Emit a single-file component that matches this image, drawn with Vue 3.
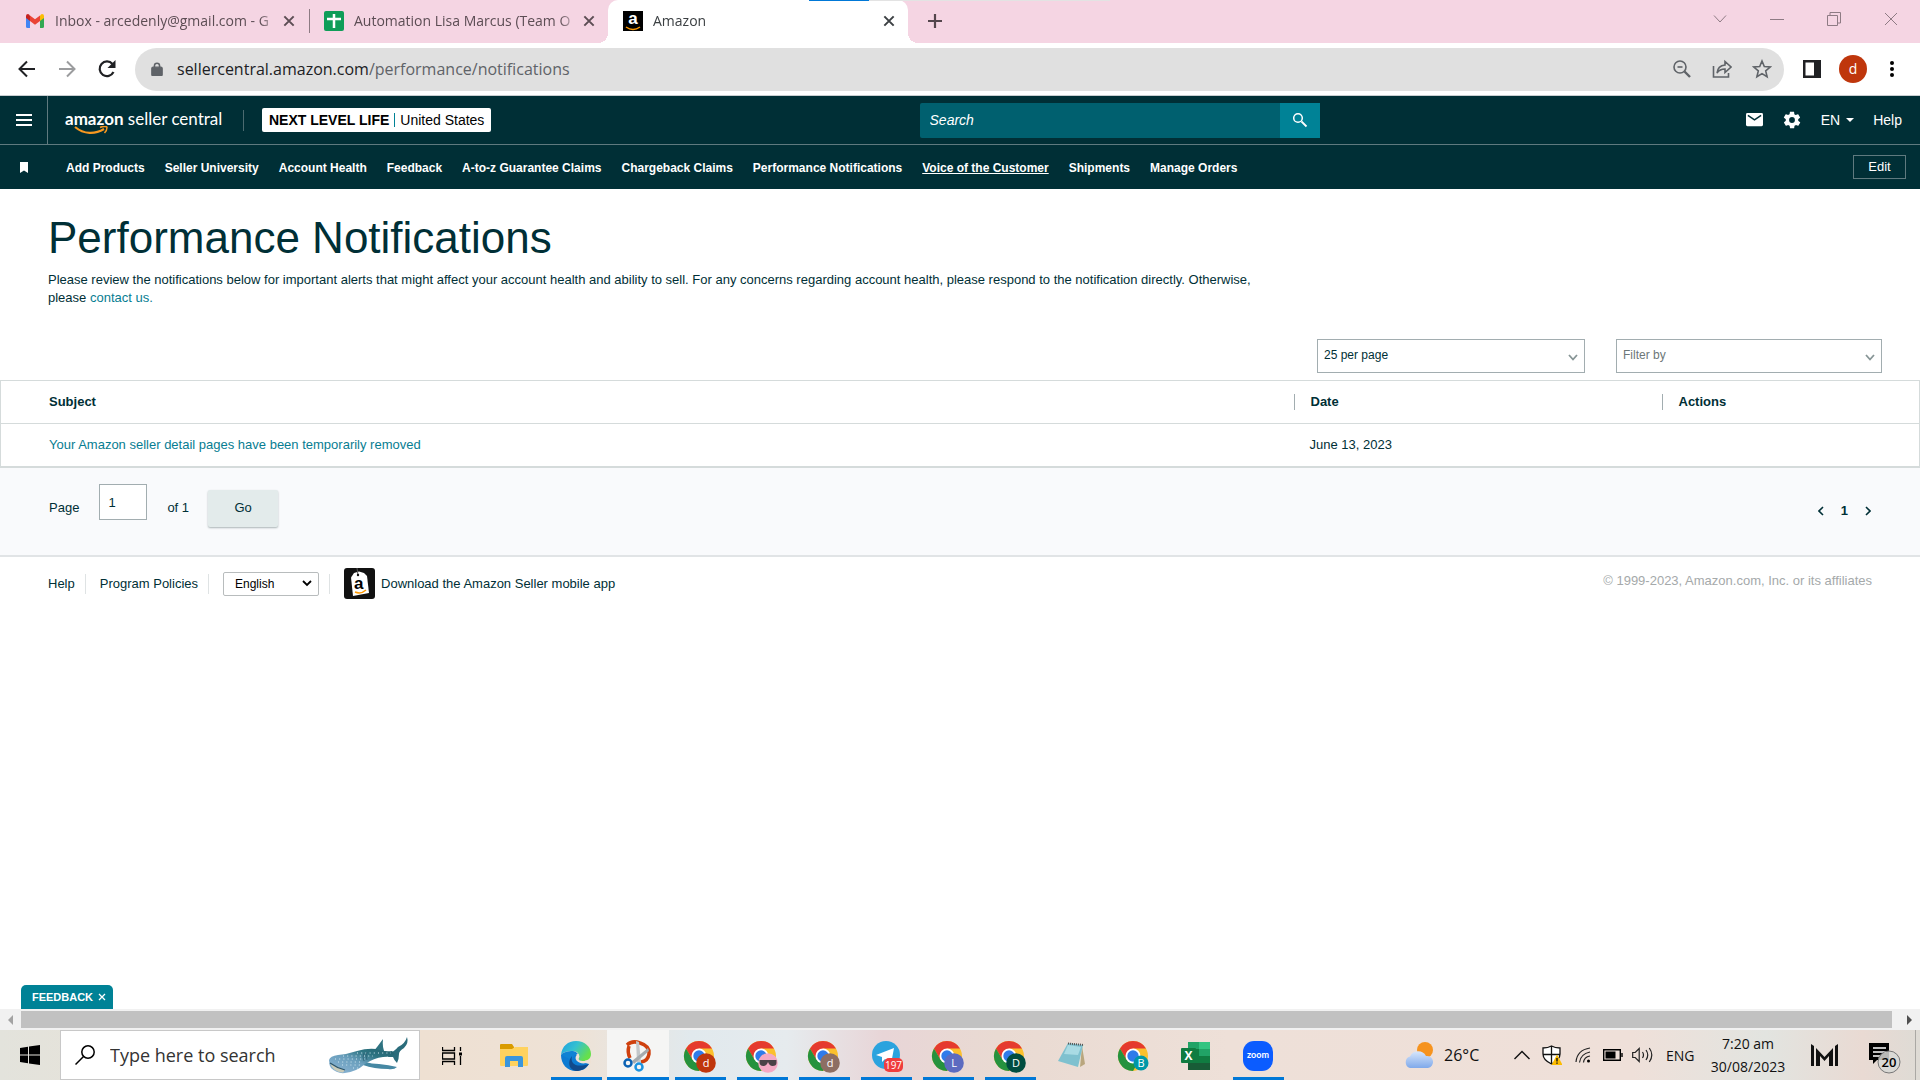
<script setup>
import { ref } from 'vue'

const tabs = [
  { id: 'gmail', title: 'Inbox - arcedenly@gmail.com - G', active: false },
  { id: 'sheet', title: 'Automation Lisa Marcus (Team O', active: false },
  { id: 'amazon', title: 'Amazon', active: true }
]

const favorites = [
  'Add Products',
  'Seller University',
  'Account Health',
  'Feedback',
  'A-to-z Guarantee Claims',
  'Chargeback Claims',
  'Performance Notifications',
  'Voice of the Customer',
  'Shipments',
  'Manage Orders'
]
const hovered = 'Voice of the Customer'

const notifications = [
  { subject: 'Your Amazon seller detail pages have been temporarily removed', date: 'June 13, 2023' }
]

// Taskbar apps, left to right
const apps = [
  { id: 'taskview', label: 'Task View' },
  { id: 'explorer', label: 'File Explorer' },
  { id: 'edge', label: 'Edge', open: true },
  { id: 'snip', label: 'Snipping Tool', open: true, current: true },
  { id: 'chrome', label: 'Chrome d', open: true, badge: 'd', color: '#bf360c' },
  { id: 'chrome', label: 'Chrome', open: true, badge: '', color: '#f4a9c4' },
  { id: 'chrome', label: 'Chrome d', open: true, badge: 'd', color: '#8d6e63' },
  { id: 'telegram', label: 'Telegram', open: true },
  { id: 'chrome', label: 'Chrome L', open: true, badge: 'L', color: '#5c6bc0' },
  { id: 'chrome', label: 'Chrome D', open: true, badge: 'D', color: '#004d40' },
  { id: 'notepad', label: 'Notepad' },
  { id: 'chrome', label: 'Chrome B', badge: 'B', color: '#0097a7', small: true },
  { id: 'excel', label: 'Excel' },
  { id: 'zoom', label: 'Zoom', open: true }
]

const page = ref('1')
const perPage = ref('25 per page')
const filterBy = ref('Filter by')
const language = ref('English')
const query = ref('')
const winQuery = ref('')
</script>

<template>
  <div class="screen">
    <!-- Browser tabs -->
    <div class="tabstrip">
      <div class="progress"></div>
      <div v-for="tab in tabs" :key="tab.id" class="tab" :class="[tab.id, { active: tab.active }]">
        <svg v-if="tab.id === 'gmail'" class="favicon" viewBox="0 0 20 16">
          <path d="M1 3v10.500Q1 15 2.500 15H5V6.500z" fill="#4285f4" />
          <path d="M19 3v10.500q0 1.500-1.500 1.500H15V6.500z" fill="#34a853" />
          <path d="M15 2.500V8l4-3V3q0-2-2-2-1 0-2 1.500z" fill="#fbbc04" />
          <path d="M5 8V2.500l5 3.700 5-3.700V8l-5 3.800z" fill="#ea4335" />
          <path d="M1 3v2l4 3V2.500Q4 1 3 1 1 1 1 3z" fill="#c5221f" />
        </svg>
        <svg v-else-if="tab.id === 'sheet'" class="favicon" viewBox="0 0 20 20">
          <rect width="20" height="20" rx="2" fill="#0f9d58" />
          <path d="M10 3v14M3 8h14" stroke="#fff" stroke-width="2.500" />
        </svg>
        <span v-else class="favicon amazon-icon">
          <b>a</b>
          <svg viewBox="0 0 18 5"><path d="M2 1q7 5 14 0" fill="none" stroke="#f90" stroke-width="1.500" /></svg>
        </span>
        <span class="tab-title">{{ tab.title }}</span>
        <button class="tab-close" aria-label="Close tab">
          <svg viewBox="0 0 12 12"><path d="M2 2l8 8M10 2l-8 8" stroke="currentColor" stroke-width="1.700" /></svg>
        </button>
      </div>
      <button class="new-tab" aria-label="New tab">
        <svg viewBox="0 0 16 16"><path d="M8 1v14M1 8h14" stroke="#54464d" stroke-width="2.200" /></svg>
      </button>
      <div class="window-buttons">
        <button aria-label="Search tabs"><svg viewBox="0 0 14 14"><path d="M1 3.500l6 6.500 6-6.500" /></svg></button>
        <button aria-label="Minimize"><svg viewBox="0 0 14 14"><path d="M0 7.500h14" /></svg></button>
        <button aria-label="Restore"><svg viewBox="0 0 14 14"><path d="M.5 3.500h10v10H.5zM3 3.500v-3h10.500V11H10.500" /></svg></button>
        <button aria-label="Close"><svg viewBox="0 0 14 14"><path d="M1 1l12 12M13 1L1 13" /></svg></button>
      </div>
    </div>

    <!-- Address bar -->
    <div class="toolbar">
      <button aria-label="Back"><svg viewBox="0 0 20 20"><path d="M18 10H3M10 2.500L2.500 10l7.500 7.500" fill="none" stroke="#202124" stroke-width="2" /></svg></button>
      <button aria-label="Forward"><svg viewBox="0 0 20 20"><path d="M2 10h15M10 2.500l7.500 7.500-7.500 7.500" fill="none" stroke="#9b9c9e" stroke-width="2" /></svg></button>
      <button aria-label="Reload"><svg viewBox="0 0 20 20"><path d="M16.500 13A7.300 7.300 0 1 1 15.500 5" fill="none" stroke="#202124" stroke-width="2.200" /><path d="M18.500 1v8h-8z" fill="#202124" /></svg></button>
      <div class="omnibox">
        <svg class="lock" viewBox="0 0 14 16"><rect x="1" y="6" width="12" height="10" rx="1.500" fill="#5f6368" /><path d="M4 7V4.500a3 3 0 0 1 6 0V7" fill="none" stroke="#5f6368" stroke-width="1.800" /></svg>
        <a class="url" href="#">sellercentral.amazon.com<span>/performance/notifications</span></a>
        <button aria-label="Zoom"><svg viewBox="0 0 20 20"><circle cx="8" cy="8" r="6" /><path d="M12.500 12.500L18 18" stroke-width="2.400" /><path d="M5.500 8h5" /></svg></button>
        <button aria-label="Share"><svg viewBox="0 0 20 20"><path d="M1.500 7v11h15v-4M5 14c.5-5 3-7.500 8-8V2.500L19 8l-6 5.500V10c-4 0-6 1-8 4z" /></svg></button>
        <button aria-label="Bookmark"><svg viewBox="0 0 20 20"><path d="M10 2l2.300 5.500 5.900.5-4.500 3.900 1.400 5.800L10 14.600l-5.100 3.100 1.400-5.800L1.800 8l5.900-.5z" /></svg></button>
      </div>
      <button class="panel" aria-label="Side panel"><svg viewBox="0 0 18 18"><path d="M0 0h18v18H0zM2.500 2.500v13H11v-13z" fill="#202124" fill-rule="evenodd" /></svg></button>
      <button class="avatar">d</button>
      <button class="more" aria-label="Menu"><svg viewBox="0 0 6 18"><circle cx="3" cy="3" r="2" /><circle cx="3" cy="9" r="2" /><circle cx="3" cy="15" r="2" /></svg></button>
    </div>

    <!-- Seller Central header -->
    <header class="header">
      <div class="header-main">
        <button class="hamburger" aria-label="Menu"><svg viewBox="0 0 16 12"><path d="M0 1h16M0 6h16M0 11h16" stroke="#fff" stroke-width="1.800" /></svg></button>
        <a class="logo" href="#">
          <span class="logo-name"><b>amazon</b> seller central</span>
          <svg class="smile" viewBox="0 0 34 9"><path d="M1 1c9 7.500 20 7.500 29 2" fill="none" stroke="#f79820" stroke-width="2.200" /><path d="M26 1.500c3-1.500 7-1.500 7 0s-1 4-2.500 5.500" fill="none" stroke="#f79820" stroke-width="1.500" /></svg>
        </a>
        <button class="account"><b>NEXT LEVEL LIFE</b><i></i>United States</button>
        <form class="search" @submit.prevent>
          <input v-model="query" type="text" placeholder="Search" aria-label="Search" />
          <button aria-label="Search"><svg viewBox="0 0 16 16"><circle cx="6" cy="6" r="4.300" fill="none" stroke="#fff" stroke-width="1.500" /><path d="M9.500 9.500l5 5" stroke="#fff" stroke-width="1.800" /></svg></button>
        </form>
        <div class="header-tools">
          <button aria-label="Messages"><svg class="mail" viewBox="0 0 18 14"><rect width="18" height="14" rx="1.500" fill="#fff" /><path d="M2 2.500l7 4.700 7-4.700" fill="none" stroke="#002f36" stroke-width="1.600" /></svg></button>
          <button aria-label="Settings"><svg class="gear" viewBox="0 0 24 24"><path fill="#fff" fill-rule="evenodd" d="M19.400 13c0-.3.100-.6.100-1s0-.7-.1-1l2.100-1.600c.2-.2.300-.4.100-.7l-2-3.400c-.1-.2-.4-.3-.6-.2l-2.500 1c-.5-.4-1.100-.7-1.700-1L14.500 2.400c0-.2-.2-.4-.5-.4h-4c-.3 0-.5.200-.5.400l-.4 2.700c-.6.200-1.100.6-1.700 1l-2.500-1c-.2-.1-.5 0-.6.200l-2 3.400c-.1.200-.1.500.1.700L4.600 11c0 .3-.1.600-.1 1s0 .7.1 1l-2.100 1.600c-.2.200-.2.400-.1.700l2 3.400c.1.200.4.300.6.200l2.500-1c.5.400 1.100.7 1.700 1l.4 2.700c0 .2.200.4.500.4h4c.3 0 .5-.2.500-.4l.4-2.700c.6-.2 1.100-.6 1.700-1l2.500 1c.2.100.5 0 .6-.2l2-3.400c.1-.2.100-.5-.1-.7zM12 15.500a3.500 3.500 0 1 1 0-7 3.500 3.500 0 0 1 0 7z" /></svg></button>
          <button class="lang">EN <svg viewBox="0 0 8 4"><path d="M0 0h8L4 4z" fill="#fff" /></svg></button>
          <a href="#">Help</a>
        </div>
      </div>
      <nav class="favorites">
        <svg class="bookmark" viewBox="0 0 8 11"><path d="M0 0h8v11L4 8.500 0 11z" fill="#fff" /></svg>
        <a v-for="item in favorites" :key="item" href="#" :class="{ hovered: item === hovered }">{{ item }}</a>
        <button class="edit">Edit</button>
      </nav>
    </header>

    <!-- Page -->
    <main class="content">
      <section class="intro">
        <h1>Performance Notifications</h1>
        <p>
          Please review the notifications below for important alerts that might affect your account health and ability to sell.
          For any concerns regarding account health, please respond to the notification directly. Otherwise, please
          <a href="#">contact us.</a>
        </p>
      </section>
      <div class="filters">
        <div class="dropdown">
          <select v-model="perPage" aria-label="Results per page"><option>25 per page</option><option>50 per page</option></select>
          <svg viewBox="0 0 10 7"><path d="M1 1l4 4.500L9 1" /></svg>
        </div>
        <div class="dropdown muted">
          <select v-model="filterBy" aria-label="Filter by"><option>Filter by</option></select>
          <svg viewBox="0 0 10 7"><path d="M1 1l4 4.500L9 1" /></svg>
        </div>
      </div>
      <table class="notifications">
        <thead>
          <tr>
            <th class="col-subject"><span>Subject</span></th>
            <th class="col-date"><span>Date</span></th>
            <th class="col-actions"><span>Actions</span></th>
          </tr>
        </thead>
        <tbody>
          <tr v-for="row in notifications" :key="row.subject">
            <td class="col-subject"><a href="#">{{ row.subject }}</a></td>
            <td class="col-date">{{ row.date }}</td>
            <td></td>
          </tr>
        </tbody>
      </table>
      <div class="pagination">
        <form class="goto" @submit.prevent>
          <label for="page">Page</label>
          <input id="page" v-model="page" type="text" />
          <span>of 1</span>
          <button>Go</button>
        </form>
        <div class="pager">
          <button aria-label="Previous page"><svg viewBox="0 0 6 10"><path d="M5 1L1 5l4 4" /></svg></button>
          <b>1</b>
          <button aria-label="Next page"><svg viewBox="0 0 6 10"><path d="M1 1l4 4-4 4" /></svg></button>
        </div>
      </div>
      <footer class="footer">
        <a class="foot-help" href="#">Help</a>
        <a class="foot-policies" href="#">Program Policies</a>
        <div class="foot-language">
          <div class="language">
            <select v-model="language" aria-label="Language"><option>English</option></select>
            <svg viewBox="0 0 10 7"><path d="M1 1l4 4 4-4" /></svg>
          </div>
        </div>
        <a class="foot-app" href="#">
          <svg viewBox="0 0 31 31">
            <rect width="31" height="31" rx="3" fill="#111" />
            <path d="M7 9.500L10 5l5-1.500L20 5l3 3 2 17-16 3z" fill="#fff" />
            <path d="M13 0l1 7" stroke="#555" />
            <circle cx="14" cy="7" r="1.200" fill="#111" />
            <text x="10" y="21" font-family="Liberation Sans, sans-serif" font-weight="bold" font-size="17">a</text>
            <path d="M11 24q6 2.500 11-2" fill="none" stroke="#f90" stroke-width="1.500" />
          </svg>
          Download the Amazon Seller mobile app
        </a>
        <span class="copyright">© 1999-2023, Amazon.com, Inc. or its affiliates</span>
      </footer>
      <button class="feedback">FEEDBACK <svg viewBox="0 0 8 8"><path d="M1 1l6 6M7 1L1 7" stroke="#fff" stroke-width="1.300" /></svg></button>
    </main>

    <div class="scrollbar">
      <svg viewBox="0 0 5 10"><path d="M5 0v10L0 5z" fill="#a3a3a3" /></svg>
      <div class="thumb"></div>
      <svg viewBox="0 0 5 10"><path d="M0 0v10l5-5z" fill="#505050" /></svg>
    </div>

    <!-- Windows taskbar -->
    <div class="taskbar">
      <button class="start" aria-label="Start"><svg viewBox="0 0 20 20"><path d="M0 3l8-1.200v7.700H0zM9 1.600L20 0v9.500H9zM0 10.500h8v7.700L0 17zM9 10.500h11V20L9 18.400z" /></svg></button>
      <div class="win-search">
        <svg class="glass" viewBox="0 0 20 20"><circle cx="13" cy="7" r="6.200" fill="none" stroke="#000" stroke-width="1.500" /><path d="M8.500 11.500L.5 19.500" stroke="#000" stroke-width="1.500" /></svg>
        <input v-model="winQuery" type="text" placeholder="Type here to search" aria-label="Type here to search" />
        <svg class="whale" viewBox="0 0 80 40">
          <defs>
            <linearGradient id="skin" x1="0" y1="1" x2="1" y2="0"><stop offset="0" stop-color="#8fb6d6" /><stop offset=".45" stop-color="#6a9fbd" /><stop offset=".7" stop-color="#2d7482" /><stop offset="1" stop-color="#215f6c" /></linearGradient>
          </defs>
          <path d="M44 17Q49 11 54 4q-1 8 2 14z" fill="#2f7381" />
          <path d="M36 27q7 2 14 2 10 1 18 3-3 3-9 2-14 0-25-4z" fill="#4688a3" />
          <path d="M60 18q5-1 9-6 7-3 9-10 2 6-3 11-5 3-5 6 0 5-2 9-3-3-4-6l-5 0z" fill="#2a6c7b" />
          <path d="M0 25q1-4 9-5 10-1 19-4 10-3 19-2 8 3 16 2l3 3q-4 3-12 3-9 1-18 7-9 8-20 9-8 1-14-5-2-3-2-8z" fill="url(#skin)" />
          <path d="M1 28q6 4 15 7l-2 2.500Q4 37 1 28z" fill="#c9cbb9" />
          <path d="M1 28q7 5 15 7" fill="none" stroke="#29536a" stroke-width="1.200" />
          <path d="M6 24h30M9 27h24M13 30h18M14 21h30M28 18h34M24 33h5" fill="none" stroke="#cfe6ef" stroke-dasharray="1 3.200" />
          <path d="M35 18q-2 4 0 8M38 17q-2 4 0 8" fill="none" stroke="#2c5e72" stroke-width=".8" />
        </svg>
      </div>
      <div class="apps">
        <button v-for="(app, i) in apps" :key="i" class="app" :class="{ open: app.open, current: app.current }" :aria-label="app.label">
          <svg v-if="app.id === 'taskview'" class="icon-task" viewBox="0 0 20 20"><path d="M.5 1v3.500h12V1M.5 19v-3.500h12V19M.5 7h12v6H.5zM18.500 1v4M18.500 10v9" fill="none" stroke="#000" stroke-width="1.300" /><path d="M17 6.500h3v3h-3z" /></svg>
          <svg v-else-if="app.id === 'explorer'" class="icon" viewBox="0 0 32 32">
            <path d="M2 5q0-1 1-1h11l2 3v4H2z" fill="#d99b00" /><path d="M2 9h12l3-2h13v18q0 1-1 1H3q-1 0-1-1z" fill="#ffd25e" />
            <path d="M7 27V18q0-2 2-2h14q2 0 2 2v9h-5v-6h-8v6z" fill="#3a96dd" />
          </svg>
          <svg v-else-if="app.id === 'edge'" class="icon" viewBox="0 0 32 32">
            <defs>
              <linearGradient id="edgeTop" x1="0" y1="0" x2="1" y2=".5"><stop offset="0" stop-color="#1b9de2" /><stop offset=".5" stop-color="#35c1d0" /><stop offset="1" stop-color="#66e04b" /></linearGradient>
            </defs>
            <path d="M1 15C1 24 7 31 16 31c6 0 10-2 13-7l-7-2-7-9z" fill="#0c7bd2" />
            <path d="M1 15C2 6 8 1 16 1c9 0 15 6 15 13 0 5-4 7-8 7-3 0-5-1-4-3 1-3-1-7-6-7-6 0-10 1-12 4z" fill="url(#edgeTop)" />
            <path d="M1 15c2-3 7-4 12-4q3 0 5 3-5 1-6 6z" fill="#0f82d4" />
            <path d="M12 16c-2 8 4 12 17 8-4 5-8 7-13 7-7-1-9-9-4-15z" fill="#114a8b" />
            <path d="M18 14c-3 2-3 5-1 7 3 3 8 3 12 1v2l2-1v-5c-3 3-6 3-8 3-3 0-5-1-4-3q1-2-1-4z" fill="#eee1d4" />
          </svg>
          <svg v-else-if="app.id === 'snip'" class="icon" viewBox="0 0 32 32">
            <path d="M5 5q5-5 13-2 10 3 9 11-1 7-8 8M7 6q-2 6 1 12" fill="none" stroke="#cf400e" stroke-width="3.500" />
            <path d="M14 1l3 1 2 20h-4z" fill="#c3c7ca" /><path d="M26 8l1 3-15 13-2-3z" fill="#a5abaf" />
            <circle cx="6" cy="23" r="3.500" fill="none" stroke="#0b62b4" stroke-width="2.500" /><circle cx="17" cy="27" r="3.500" fill="none" stroke="#1b93e0" stroke-width="2.500" />
          </svg>
          <svg v-else-if="app.id === 'chrome'" class="icon" viewBox="0 0 32 32">
            <circle cx="15" cy="16" r="15" fill="#fbc02d" />
            <path d="M2 8.500A15 15 0 0 1 28 8.500H15L8.500 20z" fill="#e53a2e" />
            <path d="M2 8.500A15 15 0 0 0 15 31L21.500 19.800 8.500 19.800z" fill="#25923e" />
            <circle cx="15" cy="16" r="7.500" fill="#fff" /><circle cx="15" cy="16" r="5.700" fill="#2f7bea" />
            <circle :cx="app.small ? 23 : 22" cy="23" :r="app.small ? 7.500 : 9.800" :fill="app.color" />
            <text v-if="app.badge" :x="app.small ? 23 : 22" y="27" text-anchor="middle" font-family="Open Sans, sans-serif" font-size="11" fill="#fff">{{ app.badge }}</text>
            <path v-else d="M13.500 20h17v3q0 3-4 3-3 0-4.500-4-1.500 4-4.500 4-4 0-4-4z" fill="#4a4247" />
          </svg>
          <svg v-else-if="app.id === 'telegram'" class="icon" viewBox="0 0 32 32">
            <circle cx="16" cy="15" r="14" fill="#2ba3de" /><path d="M6 15l18-7-3 16-6-5-3 3v-5z" fill="#fff" />
            <rect x="14" y="18" width="19" height="14" rx="5" fill="#f03d3d" />
            <text x="23.500" y="29" text-anchor="middle" font-family="Open Sans, sans-serif" font-size="10" fill="#fff">197</text>
          </svg>
          <svg v-else-if="app.id === 'notepad'" class="icon" viewBox="0 0 32 32">
            <path d="M13 4l16 1-3 21-4 2z" fill="#e8e4d8" /><path d="M26 6l3 18-5 3z" fill="#b9a67e" />
            <path d="M12 3l15 2-5 22L2 21z" fill="#7fc1cf" /><path d="M12 5l13 2-3 8-14-1z" fill="#a9dbe4" />
            <path d="M12 3.500l16 1.500" stroke="#555" stroke-width="2" stroke-dasharray="1 1" />
          </svg>
          <svg v-else-if="app.id === 'excel'" class="icon" viewBox="0 0 32 32">
            <path d="M8 2h22v28H8z" fill="#21a366" /><path d="M19 2h11v7H19z" fill="#33c481" /><path d="M8 9h11v14H8z" fill="#107c41" /><path d="M19 16h11v7H19z" fill="#107c41" /><path d="M8 23h22v7H8z" fill="#185c37" />
            <rect x="1" y="8" width="15" height="15" rx="1" fill="#107c41" />
            <text x="8.500" y="20" text-anchor="middle" font-family="Open Sans, sans-serif" font-weight="bold" font-size="12" fill="#fff">X</text>
          </svg>
          <svg v-else class="icon" viewBox="0 0 32 32">
            <rect x="1" y="1" width="30" height="30" rx="11" fill="#0b5cff" />
            <text x="16" y="18" text-anchor="middle" font-family="Lato, sans-serif" font-weight="bold" font-size="9" fill="#fff">zoom</text>
          </svg>
        </button>
      </div>
      <div class="tray">
        <svg class="weather" viewBox="0 0 30 26">
          <defs><linearGradient id="cloud" x1="0" y1="0" x2="0" y2="1"><stop offset="0" stop-color="#d7e6fb" /><stop offset="1" stop-color="#7fa9ea" /></linearGradient></defs>
          <circle cx="21" cy="8" r="8" fill="#f6931e" /><path d="M6 26a6 6 0 0 1 0-11.500A9 9 0 0 1 22 14a6 6 0 0 1 2 12z" fill="url(#cloud)" />
        </svg>
        <span class="temp">26°C</span>
        <svg class="up" viewBox="0 0 16 10"><path d="M.5 9L8 1.500 15.500 9" fill="none" stroke="#111" stroke-width="1.400" /></svg>
        <svg class="shield" viewBox="0 0 20 20"><path d="M9.500 1Q6 3 1 3v6q0 6 8.500 10Q18 15 18 9V3q-5 0-8.500-2z" fill="#fff" stroke="#111" stroke-width="1.300" /><path d="M9.500 1v18M1 9.500h17" stroke="#111" stroke-width="1.300" /><path d="M15 9.500l5.500 10.500h-11z" fill="#fdbc00" /><path d="M15 13v3.500M15 17.500v1.300" stroke="#111" stroke-width="1.400" /></svg>
        <svg class="wifi" viewBox="0 0 16 16"><path d="M1 15Q2 3 15 1M4.500 15.500Q5.500 7 15 5M8.500 15.500Q9 10 15 9" fill="none" stroke="#222" stroke-width="1.200" /><circle cx="13.500" cy="14" r="1.500" /></svg>
        <svg class="battery" viewBox="0 0 20 12"><path d="M.7.7h16.600v10.600H.7zM19 4v4" fill="none" stroke="#000" stroke-width="1.400" /><path d="M2.500 2.500h10v7h-10z" /></svg>
        <svg class="volume" viewBox="0 0 21 18"><path d="M.7 6.500h2.500l4-4v13l-4-4H.7zM10.500 6q2 3 0 6M14 4q3.500 5 0 10M17.300 2q5 7 0 14" fill="none" stroke="#222" stroke-width="1.200" /></svg>
        <span class="ime">ENG</span>
        <div class="clock"><span>7:20 am</span><span>30/08/2023</span></div>
        <svg class="mlogo" viewBox="0 0 27 22"><path d="M0 0l3 2v20H0zM5 4l8.500 9L22 4v18h-4V12l-4.500 5L9 12v10H5zM27 0l-3 2v20h3z" fill="#111" /></svg>
        <svg class="notices" viewBox="0 0 32 32"><path d="M0 1h20v17H8l-4 4v-4H0z" /><path d="M4 6h13M4 10h13M4 14h7" stroke="#fff" stroke-width="1.500" /><circle cx="20" cy="20" r="11" fill="#d8d8d5" fill-opacity=".85" stroke="#777" /><text x="20" y="25" text-anchor="middle" font-family="Open Sans, sans-serif" font-weight="600" font-size="13">20</text></svg>
      </div>
    </div>
  </div>
</template>

<style>
body {
  margin: 0;
}
</style>

<style scoped>
.screen {
  display: flex;
  flex-direction: column;
  min-height: 100vh;
  background: #fff;
  color: #002f36;
  font: 13px/18px 'Liberation Sans', Arial, sans-serif;
}

.screen * {
  box-sizing: border-box;
}

button {
  display: flex;
  align-items: center;
  justify-content: center;
  padding: 0;
  border: 0;
  background: none;
  color: inherit;
  font: inherit;
}

a {
  color: inherit;
  text-decoration: none;
}

svg {
  display: block;
  flex: none;
}

input,
select {
  font: inherit;
  border-radius: 0;
  outline: 0;
}

/* Tab strip */
.tabstrip {
  position: relative;
  display: flex;
  height: 43px;
  background: #f5d5e3;
  font: 14px/20px 'Open Sans', 'Noto Sans', sans-serif;
}

/* Thin loading line over the window's top edge */
.progress {
  position: absolute;
  top: 0;
  left: 809px;
  z-index: 1;
  width: 301px;
  height: 1px;
  background: linear-gradient(to right, #0078d7 20%, #e3e3e3 20%);
}

.tab {
  display: flex;
  align-items: center;
  width: 300px;
  padding: 0 12px 2px 15px;
  color: #5c4d54;
}

.tab.gmail {
  width: 308px;
  padding-left: 25px;
}

.tab.active {
  position: relative;
  border-radius: 10px 10px 0 0;
  background: #fff;
  color: #3c4043;
}

.tab.active::before,
.tab.active::after {
  position: absolute;
  bottom: 0;
  width: 10px;
  height: 10px;
  content: '';
}

.tab.active::before {
  right: 100%;
  background: radial-gradient(circle at 0 0, transparent 10px, #fff 10px);
}

.tab.active::after {
  left: 100%;
  background: radial-gradient(circle at 100% 0, transparent 10px, #fff 10px);
}

.favicon {
  width: 20px;
  height: 20px;
  margin-right: 10px;
}

.tab.gmail .favicon {
  height: 16px;
}

.amazon-icon {
  display: flex;
  flex-direction: column;
  align-items: center;
  background: #000;
  color: #fff;
  font: 17px/15px 'Liberation Sans', sans-serif;
}

.amazon-icon svg {
  width: 18px;
  height: 5px;
}

.tab-title {
  flex: 1;
  width: 0;
  overflow: hidden;
  white-space: nowrap;
  mask-image: linear-gradient(to right, #000 92%, transparent);
}

.tab-close {
  width: 14px;
  margin-left: 4px;
}

.tab-close svg {
  width: 14px;
}

.tab.sheet::before {
  width: 1px;
  height: 24px;
  margin: 0 14px 0 -14px;
  background: #8d7a83;
  content: '';
}

.new-tab {
  width: 54px;
  padding-bottom: 2px;
}

.new-tab svg {
  width: 16px;
}

.window-buttons {
  display: flex;
  margin-left: auto;
  padding: 0 1px 5px 0;
}

.window-buttons button {
  width: 57px;
}

.window-buttons svg {
  width: 14px;
  fill: none;
  stroke: #8e7b84;
}

/* Toolbar */
.toolbar {
  display: flex;
  align-items: center;
  height: 53px;
  padding: 0 16px 0 7px;
  border-bottom: 1px solid #c9ced1;
  font: 16px/24px 'Open Sans', 'Noto Sans', sans-serif;
}

.toolbar > button {
  width: 40px;
}

.toolbar > button svg {
  width: 20px;
}

.omnibox {
  display: flex;
  flex: 1;
  align-items: center;
  gap: 20px;
  height: 43px;
  margin-left: 8px;
  padding: 0 12px 0 16px;
  border-radius: 22px;
  background: #e0e0e0;
}

.omnibox svg {
  width: 20px;
  fill: none;
  stroke: #5f6368;
  stroke-width: 1.6;
}

.omnibox .lock {
  width: 12px;
  margin-right: -6px;
}

.url {
  flex: 1;
  color: #202124;
}

.url span {
  color: #5f6368;
}

.toolbar .panel {
  margin-left: 8px;
}

.toolbar .panel svg {
  width: 18px;
}

.toolbar .avatar {
  width: 28px;
  height: 28px;
  margin: 0 6px 0 7px;
  border-radius: 50%;
  background: #bf360c;
  color: #fff;
  font-size: 14px;
}

.toolbar .more {
  width: 24px;
  margin-left: 7px;
}

.toolbar .more svg {
  width: 6px;
}

/* Header */
.header {
  background: #002f36;
  color: #fff;
}

.header-main {
  display: grid;
  grid-template-columns: 48px 196px 9fr 400px 8fr;
  align-items: center;
  height: 49px;
  border-bottom: 1px solid #5f7a7f;
  font-size: 14px;
}

.hamburger {
  height: 48px;
  border-right: 1px solid #5f7a7f;
}

.hamburger svg {
  width: 16px;
}

.logo {
  height: 21px;
  margin-left: 17px;
  border-right: 1px solid #4c6b70;
}

.logo-name {
  display: block;
  font: 17px/18px Lato, 'Open Sans', sans-serif;
  white-space: nowrap;
}

.smile {
  width: 34px;
  margin: -2px 0 0 9px;
}

.account {
  gap: 5px;
  justify-self: start;
  height: 24px;
  margin-left: 18px;
  padding: 0 7px;
  border-radius: 2px;
  background: #fff;
  color: #000;
  white-space: nowrap;
}

.account i {
  width: 1px;
  height: 14px;
  background: #008296;
}

.search {
  display: flex;
  height: 35px;
}

.search input {
  flex: 1;
  min-width: 0;
  padding: 0 10px;
  border: 0;
  border-radius: 2px 0 0 2px;
  background: #00606f;
  color: #fff;
}

.search input::placeholder {
  color: #fff;
  font-style: italic;
  opacity: 1;
}

.search button {
  width: 40px;
  background: #008296;
}

.search button svg {
  width: 16px;
}

.header-tools {
  display: flex;
  align-items: center;
  justify-content: flex-end;
  gap: 19px;
  padding-right: 18px;
}

.mail {
  width: 17px;
}

.gear {
  width: 20px;
}

.lang svg {
  width: 8px;
  margin-left: 6px;
}

.favorites {
  display: flex;
  align-items: center;
  gap: 20px;
  height: 44px;
  padding: 0 14px 0 20px;
  font-size: 12px;
  font-weight: bold;
}

.favorites a {
  padding-top: 2px;
}

.bookmark {
  width: 8px;
  margin-right: 18px;
}

.hovered {
  text-decoration: underline;
}

.edit {
  width: 53px;
  height: 24px;
  margin-left: auto;
  border: 1px solid #5f7a7f;
  font-size: 13px;
  font-weight: normal;
}

/* Content */
.content {
  display: flex;
  flex: 1;
  flex-direction: column;
}

.intro {
  width: 1280px;
  max-width: 100%;
  padding: 22px 0 0 48px;
}

h1 {
  margin: 0;
  font-size: 44px;
  font-weight: normal;
  line-height: 54px;
}

.intro p {
  margin: 6px 0 0;
}

.intro a,
.notifications a {
  color: #077d92;
}

.filters {
  display: flex;
  justify-content: flex-end;
  gap: 31px;
  padding: 32px 38px 7px;
  font-size: 12px;
}

.dropdown,
.language {
  display: grid;
  align-items: center;
}

.dropdown {
  width: 268px;
}

.dropdown.muted {
  width: 266px;
}

.dropdown select,
.dropdown svg,
.language select,
.language svg {
  grid-area: 1 / 1;
}

.dropdown select {
  appearance: none;
  height: 34px;
  padding: 0 6px 2px;
  border: 1px solid #a2adb0;
  background: #fff;
  color: #002f36;
}

.dropdown svg {
  justify-self: end;
  width: 10px;
  margin: 2px 7px 0 0;
  fill: none;
  stroke: #879596;
  stroke-width: 1.8;
  pointer-events: none;
}

.dropdown.muted select {
  color: #6c7778;
}

.notifications {
  width: 100%;
  border: 1px solid #d5dbdb;
  border-bottom: 2px solid #d5dbdb;
  border-collapse: collapse;
  table-layout: fixed;
}

.notifications th,
.notifications td {
  height: 43px;
  padding: 0 0 0 16px;
  text-align: left;
}

.notifications tr + tr,
.notifications tbody tr {
  border-top: 1px solid #d5dbdb;
}

.notifications .col-subject {
  padding-left: 48px;
}

th.col-date {
  width: 368px;
}

th.col-actions {
  width: 258px;
}

.notifications th.col-date,
.notifications th.col-actions {
  padding-left: 0;
}

th.col-date span,
th.col-actions span {
  display: block;
  padding-left: 16px;
  border-left: 1px solid #a2adb0;
  line-height: 16px;
}

.pagination {
  display: flex;
  align-items: center;
  justify-content: space-between;
  height: 89px;
  padding: 0 49px 6px;
  border-bottom: 2px solid #e1e4e6;
  background: #f9fafc;
}

.goto {
  display: flex;
  align-items: center;
}

.goto input {
  width: 48px;
  height: 36px;
  margin: 0 20px 12px;
  padding: 0 8px;
  border: 1px solid #a2adb0;
  background: #fff;
  color: #002f36;
}

.goto button {
  width: 70px;
  height: 37px;
  margin-left: 19px;
  border-radius: 2px;
  background: #e3ebeb;
  box-shadow: 0 1px 2px #aab4b6;
}

.pager {
  display: flex;
  align-items: center;
  gap: 17px;
  padding-top: 6px;
}

.pager svg {
  width: 6px;
  fill: none;
  stroke: #002f36;
  stroke-width: 1.6;
}

.footer {
  display: flex;
  align-items: center;
  height: 54px;
  padding: 0 48px;
}

.foot-help,
.foot-policies,
.foot-language {
  display: flex;
  align-items: center;
  height: 20px;
  margin-right: 14px;
  padding-right: 10px;
  border-right: 1px solid #dfe3e4;
}

.language select {
  appearance: none;
  width: 96px;
  height: 24px;
  padding: 0 11px;
  border: 1px solid #b8bcbd;
  border-radius: 2px;
  background: #fff;
  color: #000;
  font-size: 12px;
}

.language svg {
  justify-self: end;
  width: 10px;
  margin-right: 7px;
  fill: none;
  stroke: #000;
  stroke-width: 1.8;
  pointer-events: none;
}

.foot-app {
  display: flex;
  align-items: center;
  gap: 6px;
}

.foot-app svg {
  width: 31px;
}

.copyright {
  margin-left: auto;
  padding-bottom: 6px;
  color: #a5a9aa;
}

.feedback {
  gap: 5px;
  width: 92px;
  height: 24px;
  margin: auto 0 0 21px;
  padding-left: 4px;
  border-radius: 5px 5px 0 0;
  background: #008296;
  color: #fff;
  font-size: 11px;
  font-weight: bold;
}

.feedback svg {
  width: 8px;
}

.scrollbar {
  display: flex;
  align-items: center;
  gap: 8px;
  height: 21px;
  padding: 0 8px;
  background: #f1f1f1;
}

.scrollbar svg {
  width: 5px;
}

.thumb {
  flex: 1;
  height: 17px;
  margin-right: 7px;
  background: #c1c1c1;
}

/* Taskbar */
.taskbar {
  display: flex;
  height: 50px;
  background: linear-gradient(to right, #e3e3dc, #eee0d2 22%, #eee2d6 30%, #e1e9ed 36%, #e6ebee 41%, #e8d5d7 46%, #e9dad2 52%, #eee0d8 64%, #efe0d9 85%, #e2e4e0 92%, #e9dad3 97%, #dedbd5);
  color: #111;
  font: 16px/23px 'Open Sans', 'Noto Sans', sans-serif;
}

.start {
  width: 60px;
}

.start svg {
  width: 20px;
}

.win-search {
  display: flex;
  align-items: center;
  width: 360px;
  padding: 0 10px 0 14px;
  border: 1px solid #c8c8c8;
  background: #fff;
}

.win-search input {
  flex: 1;
  min-width: 0;
  padding: 0 15px;
  border: 0;
  background: none;
  font-size: 18px;
}

.win-search input::placeholder {
  color: #333;
  opacity: 1;
}

.glass {
  width: 20px;
}

.whale {
  width: 80px;
}

.apps {
  display: flex;
  padding-left: 1px;
}

.app {
  width: 62px;
  height: 50px;
  padding-top: 1px;
  background: linear-gradient(#0078d7, #0078d7) center bottom / 0 3px no-repeat;
}

.app.open {
  background-size: 51px 3px;
}

.app.current {
  background-color: #f5f5f4;
  background-size: 100% 3px;
}

.icon {
  width: 32px;
  overflow: visible;
}

.icon-task {
  width: 20px;
}

.tray {
  display: flex;
  align-items: center;
  margin-left: auto;
  margin-right: 4px;
  padding-right: 14px;
  border-right: 1px solid #aaa8a4;
}

.weather {
  width: 30px;
  margin-right: 10px;
}

.temp {
  width: 70px;
}

.up {
  width: 16px;
  margin-right: 12px;
}

.shield {
  width: 20px;
  margin-right: 13px;
}

.wifi {
  width: 16px;
  margin-right: 12px;
}

.battery {
  width: 20px;
  margin-right: 9px;
}

.volume {
  width: 21px;
  margin-right: 13px;
}

.ime {
  width: 44px;
  font-size: 14px;
}

.clock {
  display: flex;
  flex-direction: column;
  align-items: center;
  width: 76px;
  font-size: 14px;
}

.mlogo {
  width: 27px;
  margin: 0 31px 0 25px;
}

.notices {
  width: 32px;
  margin-top: 6px;
}
</style>
